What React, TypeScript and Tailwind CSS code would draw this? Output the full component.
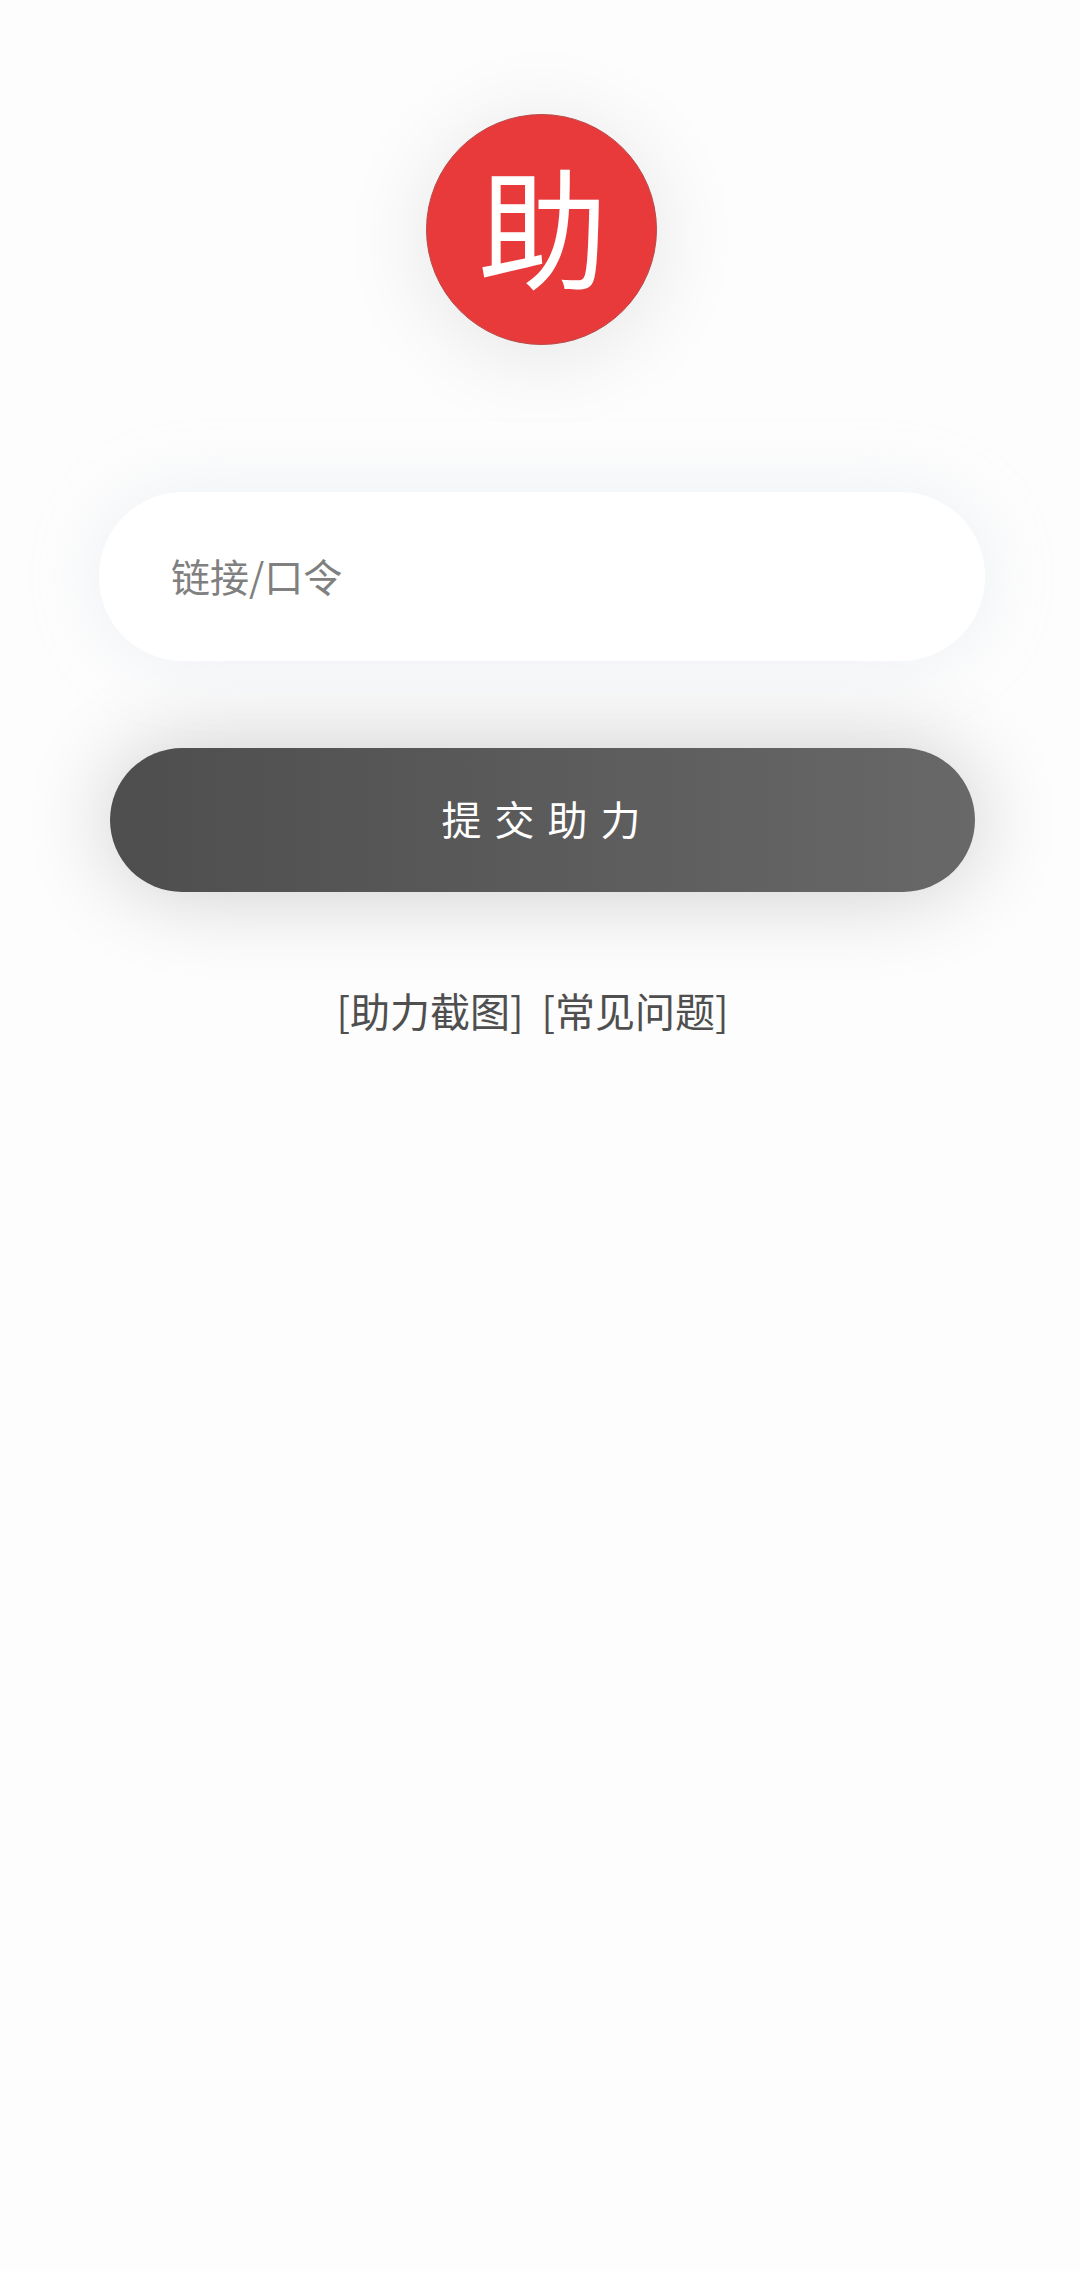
export default function App() {
  return (
    <div className="flex min-h-[2271px] w-full flex-col bg-[#fdfdfd] font-['Noto_Sans_CJK_SC',sans-serif]">
      <div className="ml-[426px] mt-[114px] flex h-[231px] w-[231px] items-center justify-center rounded-full border border-[#b84a4a] bg-[#e83a3a] pb-[16px] pl-[3px] text-[130px] leading-none text-white shadow-[0_10px_90px_rgba(0,0,0,0.1)]">
        助
      </div>
      <input
        readOnly
        placeholder="链接/口令"
        className="ml-[99px] mt-[147px] h-[169px] w-[886px] rounded-[84px] bg-white pb-[3px] pl-[72px] pr-[72px] text-[39px] text-[#333] shadow-[0_0_70px_rgba(200,210,225,0.3)] outline-none placeholder:text-[#808080]"
      />
      <button className="ml-[110px] mt-[87px] h-[144px] w-[865px] rounded-[72px] bg-gradient-to-r from-[#4e4e4e] to-[#686868] pb-[4px] pl-[10px] text-[40px] tracking-[13px] text-white shadow-[0_0_90px_rgba(0,0,0,0.2)]">
        提交助力
      </button>
      <div className="ml-[100px] mt-[88px] flex w-[865px] justify-center gap-[18px] text-[40px] leading-[60px] text-[#4f4f4f]">
        <a>[助力截图]</a>
        <a>[常见问题]</a>
      </div>
    </div>
  );
}
